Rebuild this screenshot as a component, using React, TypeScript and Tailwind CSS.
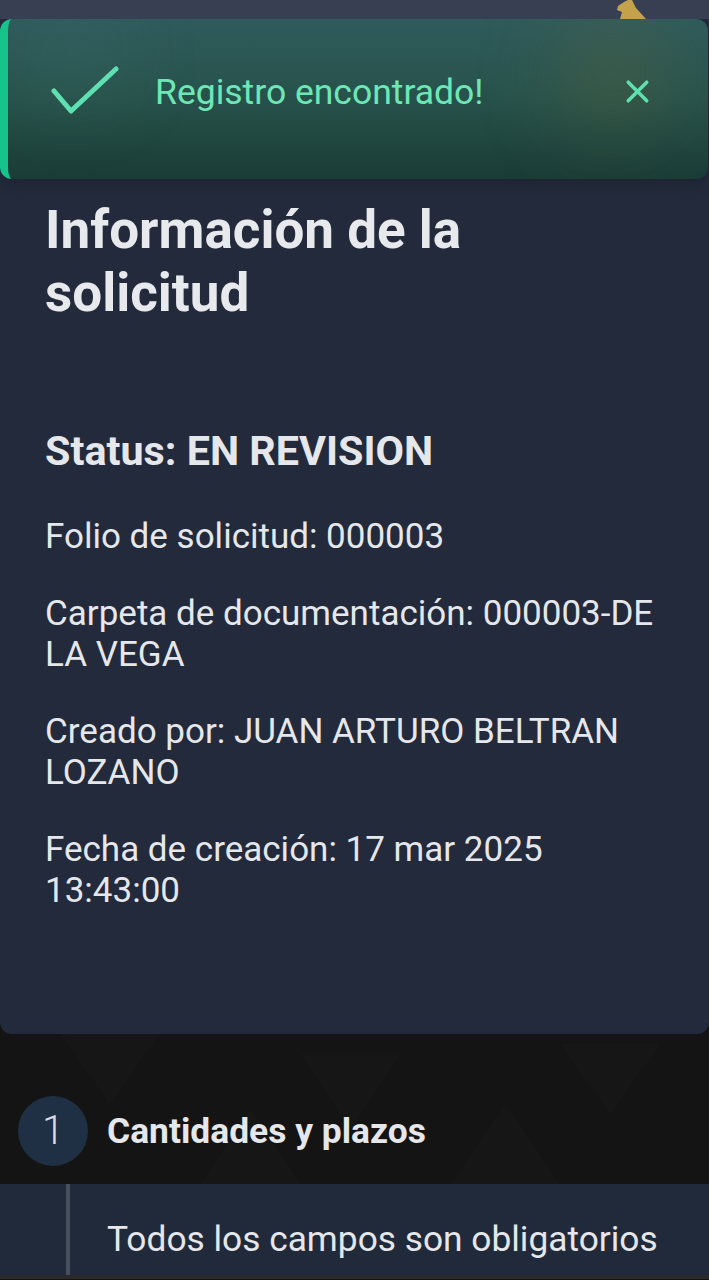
import { X } from 'lucide-react';

const font = { fontFamily: 'Roboto, "Noto Sans", sans-serif' };

const Toast = () => (
  <div className="absolute left-0 right-px top-[19px] h-[160px] overflow-hidden rounded-xl border-l-[8px] border-[#15c38b] bg-gradient-to-b from-[#2f5b5c] via-[#27524b] to-[#1a3c36] shadow-lg">
    <div className="absolute left-[20px] top-[0px] h-[70px] w-[90px] rounded-full bg-[#4a7a78]/30 blur-2xl" />
    <div className="absolute right-[40px] top-0 h-[110px] w-[110px] rounded-full bg-[#6a6a3a]/35 blur-2xl" />
    <div className="relative flex h-full items-start pl-[42px] pr-[45px] pt-[46px]">
      <svg width="70" height="50" viewBox="0 0 70 50" fill="none" className="mt-[1px] shrink-0">
        <path d="M4 25 L21 45 L66 3" stroke="#5ee0b0" strokeWidth="5" strokeLinecap="round" strokeLinejoin="round" />
      </svg>
      <span className="ml-[35px] mt-[5px] text-[35.5px] leading-[44px] text-[#6ee7b7]">Registro encontrado!</span>
      <X className="ml-auto mr-[7px] mt-[8px] h-[37px] w-[37px] text-[#5ee0b0]" strokeWidth={2.3} />
    </div>
  </div>
);

const Pattern = () => (
  <svg className="absolute inset-0 h-full w-full" preserveAspectRatio="none" viewBox="0 0 709 150">
    <g fill="#161616">
      <polygon points="60,0 160,0 110,70" />
      <polygon points="300,20 400,20 350,95" />
      <polygon points="560,10 660,10 610,80" />
      <polygon points="200,150 300,150 250,75" />
      <polygon points="450,150 560,150 505,70" />
    </g>
  </svg>
);

export default function App() {
  return (
    <div className="relative min-h-screen w-[709px] overflow-hidden bg-[#141414] text-[#e5e7eb]" style={font}>
      <div className="relative h-[19px] bg-[#383f52]">
        <svg className="absolute left-[612px] top-0" width="36" height="19" viewBox="0 0 36 19">
          <polygon points="6,6 12,2 16,0 20,0 24,8 34,19 8,19 10,12 5,10" fill="#c4a24c" />
        </svg>
      </div>

      <div className="rounded-b-xl bg-[#222a3b] px-[45px] pb-[123px] pt-[180px]">
        <h1 className="text-[53px] font-bold leading-[63px] text-[#e8e9ec]">
          Información de la
          <br />
          solicitud
        </h1>
        <h2 className="mt-[102px] text-[41.3px] font-bold leading-[48px]">Status: EN REVISION</h2>
        <div className="mt-[41px] flex flex-col gap-[36px] text-[35px] leading-[41px]">
          <p>Folio de solicitud: 000003</p>
          <p>
            Carpeta de documentación: 000003-DE
            <br />
            LA VEGA
          </p>
          <p>
            Creado por: JUAN ARTURO BELTRAN
            <br />
            LOZANO
          </p>
          <p>
            Fecha de creación: 17 mar 2025
            <br />
            13:43:00
          </p>
        </div>
      </div>

      <div className="relative h-[150px]">
        <Pattern />
        <div className="relative flex h-full items-start pl-[18px] pt-[62px]">
          <div className="flex h-[70px] w-[70px] items-center justify-center rounded-full bg-[#1f3045] text-[40px] font-light text-[#d8dbe0]">
            1
          </div>
          <span className="ml-[19px] mt-[15px] text-[35.4px] font-bold leading-[40px] text-[#e5e7eb]">
            Cantidades y plazos
          </span>
        </div>
      </div>

      <div className="flex h-[91px] bg-[#212a3a]">
        <div className="ml-[66px] w-[4px] bg-[#464e5c]" />
        <p className="ml-[37px] pt-[34px] text-[35.3px] leading-[42px] text-[#e5e7eb]">
          Todos los campos son obligatorios
        </p>
      </div>
      <div className="h-[4px] bg-[#2a2a2a]" />

      <Toast />
    </div>
  );
}
